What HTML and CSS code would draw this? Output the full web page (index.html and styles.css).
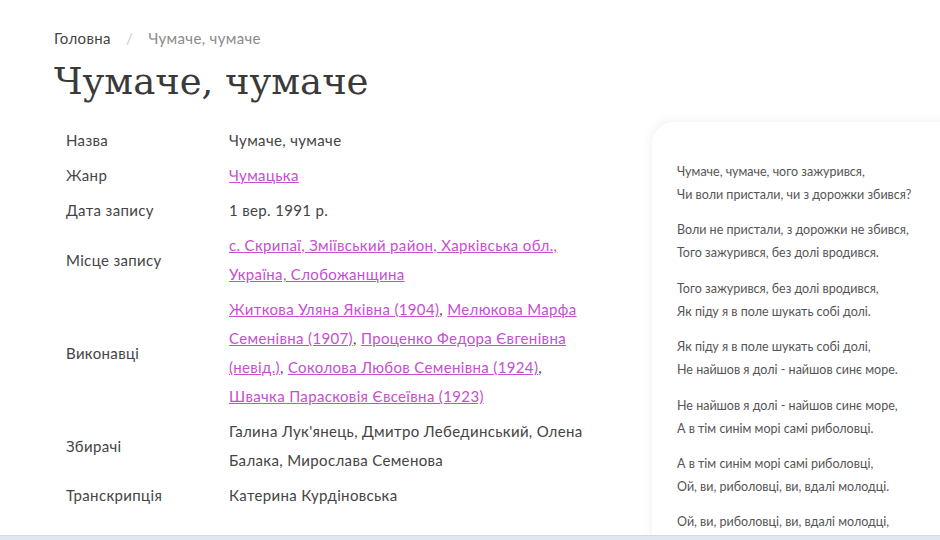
FILE: index.html
```html
<!DOCTYPE html>
<html>
<head>
    <meta charset="utf-8" />
    <title>Чумаче, чумаче</title>
    <link rel="stylesheet" href="styles.css">
</head>
<body>
    <div class="page">
        <div class="crumbs">
            <a href="#" class="crumb-home">Головна</a>
            <span class="crumb-sep">/</span>
            <span class="crumb-current">Чумаче, чумаче</span>
        </div>
        <h1 class="title">Чумаче, чумаче</h1>
        <div class="content">
            <table class="info">
                <tr>
                    <td class="label">Назва</td>
                    <td class="value">Чумаче, чумаче</td>
                </tr>
                <tr>
                    <td class="label">Жанр</td>
                    <td class="value"><a href="#">Чумацька</a></td>
                </tr>
                <tr>
                    <td class="label">Дата запису</td>
                    <td class="value">1 вер. 1991 р.</td>
                </tr>
                <tr>
                    <td class="label">Місце запису</td>
                    <td class="value"><a href="#">с. Скрипаї, Зміївський район, Харківська обл., Україна, Слобожанщина</a></td>
                </tr>
                <tr>
                    <td class="label">Виконавці</td>
                    <td class="value"><a href="#">Житкова Уляна Яківна (1904)</a>, <a href="#">Мелюкова Марфа Семенівна (1907)</a>, <a href="#">Проценко Федора Євгенівна (невід.)</a>, <a href="#">Соколова Любов Семенівна (1924)</a>, <a href="#">Швачка Парасковія Євсеївна (1923)</a></td>
                </tr>
                <tr>
                    <td class="label">Збирачі</td>
                    <td class="value">Галина Лук'янець, Дмитро Лебединський, Олена Балака, Мирослава Семенова</td>
                </tr>
                <tr>
                    <td class="label">Транскрипція</td>
                    <td class="value">Катерина Курдіновська</td>
                </tr>
            </table>
            <div class="lyrics">
                <p>Чумаче, чумаче, чого зажурився,<br>Чи воли пристали, чи з дорожки збився?</p>
                <p>Воли не пристали, з дорожки не збився,<br>Того зажурився, без долі вродився.</p>
                <p>Того зажурився, без долі вродився,<br>Як піду я в поле шукать собі долі.</p>
                <p>Як піду я в поле шукать собі долі,<br>Не найшов я долі - найшов синє море.</p>
                <p>Не найшов я долі - найшов синє море,<br>А в тім синім морі самі риболовці.</p>
                <p>А в тім синім морі самі риболовці,<br>Ой, ви, риболовці, ви, вдалі молодці.</p>
                <p>Ой, ви, риболовці, ви, вдалі молодці,</p>
            </div>
        </div>
    </div>
    <div class="bottom-bar"></div>
</body>
</html>
```

FILE: styles.css
```css
html, body {
    margin: 0;
    height: 100%;
    overflow: hidden;
}

body {
    font-family: "Lato", "Noto Sans", sans-serif;
    color: #444;
    background: #fff;
    display: flex;
    flex-direction: column;
}

.page {
    flex: 1;
    padding: 27px 0 0 54px;
    overflow: hidden;
}

.crumbs {
    font-size: 15px;
    line-height: 22px;
    letter-spacing: 0.35px;
}

.crumb-home {
    color: #444;
    text-decoration: none;
}

.crumb-sep {
    color: #ccc;
    margin: 0 11px;
}

.crumb-current {
    color: #8a8a8a;
}

.title {
    margin: 9px 0 0 0;
    font-family: "DejaVu Serif", serif;
    font-weight: normal;
    font-size: 37px;
    line-height: 48px;
    color: #3a3a3a;
}

.content {
    display: flex;
    align-items: flex-start;
    margin-top: 17px;
}

.info {
    border-collapse: collapse;
    width: 535px;
    flex: none;
    font-size: 15px;
    line-height: 29px;
    letter-spacing: 0.35px;
}

.info td {
    padding: 3px 0;
}

.info .label {
    width: 163px;
    padding-left: 12px;
    vertical-align: middle;
}

.info .value {
    vertical-align: middle;
}

.info a {
    color: #c54fcf;
}

.lyrics {
    flex: none;
    width: 320px;
    margin-left: 63px;
    margin-top: -1px;
    padding: 38px 0 20px 25px;
    border-radius: 22px 0 0 0;
    box-shadow: -2px -2px 10px rgba(0, 0, 0, 0.05);
    font-size: 12.5px;
    line-height: 23px;
    color: #555;
}

.lyrics p {
    margin: 0 0 12.4px 0;
}

.bottom-bar {
    height: 4px;
    flex: none;
    background: #dfe8f2;
    border-top: 1px solid #d6d9de;
}
```
